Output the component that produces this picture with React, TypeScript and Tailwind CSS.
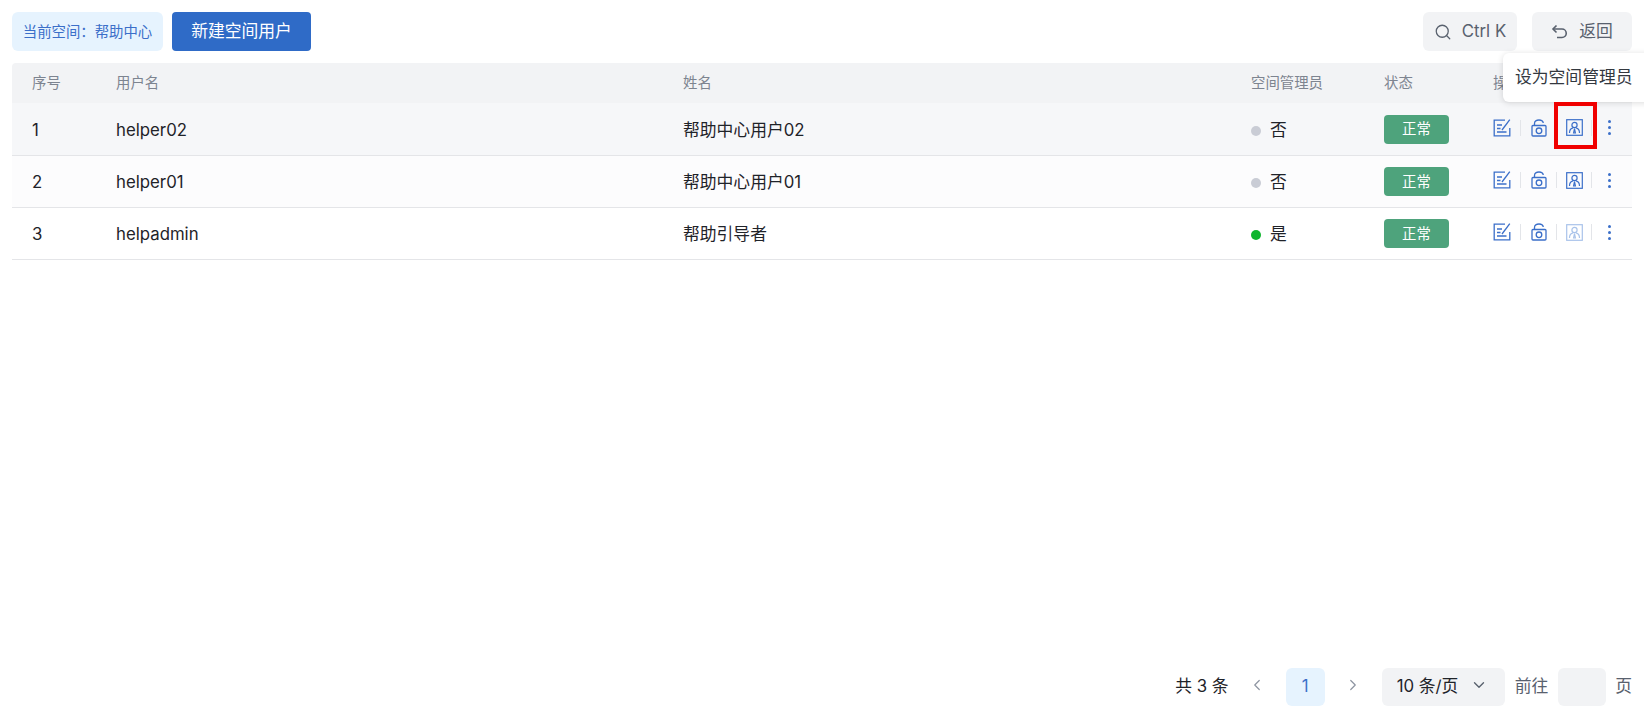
import { ChevronDown, ChevronLeft, ChevronRight, Search } from "lucide-react";

const users = [
  { id: 1, username: "helper02", name: "帮助中心用户02", admin: false, bg: "bg-[#f6f7f9]" },
  { id: 2, username: "helper01", name: "帮助中心用户01", admin: false, bg: "bg-[#fcfcfd]" },
  { id: 3, username: "helpadmin", name: "帮助引导者", admin: true, bg: "bg-white" },
];

const EditIcon = () => (
  <svg width="18" height="18" viewBox="0 0 18 18" fill="none" stroke="#3b6fc9" strokeWidth="1.3">
    <path d="M12 1.2H1.2v15.6h15.6V9" />
    <path d="M4 6h5M4 9.5h3.5M4 13h9.5" />
    <path d="M9 11 16.8 0.6" />
  </svg>
);

const LockIcon = () => (
  <svg width="16" height="18" viewBox="0 0 16 18" fill="none" stroke="#3b6fc9" strokeWidth="1.3">
    <rect x="1" y="6.5" width="14" height="10.5" rx="1" />
    <path d="M3.5 6.5V4.5C3.5 2 5.5 1 8 1s4 1.2 4.3 3" />
    <circle cx="8" cy="11.8" r="2.8" />
  </svg>
);

const AdminIcon = ({ disabled }: { disabled?: boolean }) => (
  <svg
    width="17"
    height="17"
    viewBox="0 0 17 17"
    fill="none"
    stroke={disabled ? "#a9c3ea" : "#3b6fc9"}
    strokeWidth="1.2"
  >
    <rect x="0.7" y="0.7" width="15.6" height="15.6" />
    <circle cx="8.5" cy="6" r="2.6" />
    <path d="M3.5 14c0-3 1.6-4.8 3.6-5.2M13.5 14c0-3-1.6-4.8-3.6-5.2M8.5 9.5 7.6 14h1.8z" />
  </svg>
);

const BackIcon = () => (
  <svg width="18" height="18" viewBox="0 0 18 18" fill="none" stroke="currentColor" strokeWidth="1.6">
    <path d="M5.5 2.5 2 6l3.5 3.5" />
    <path d="M2 6h9a4 4 0 0 1 0 8.5H6" />
  </svg>
);

const Divider = ({ hidden }: { hidden?: boolean }) => (
  <span className={`block h-[16px] w-px ${hidden ? "bg-transparent" : "bg-[#e3e5e9]"}`} />
);

const MoreIcon = () => (
  <span className="flex flex-col gap-[3px]">
    <span className="h-[3px] w-[3px] rounded-full bg-[#3b6fc9]" />
    <span className="h-[3px] w-[3px] rounded-full bg-[#3b6fc9]" />
    <span className="h-[3px] w-[3px] rounded-full bg-[#3b6fc9]" />
  </span>
);

export default function App() {
  return (
    <div
      className="relative h-[718px] w-[1644px] overflow-hidden bg-white text-[#1f2329]"
      style={{ fontFamily: 'Inter, "Noto Sans CJK SC", sans-serif' }}
    >
      {/* Toolbar */}
      <div className="flex h-[63px] items-start px-3 pt-3">
        <div className="flex h-[39px] w-[151px] items-center justify-center rounded-md bg-[#e6f3fe] text-[14.4px] text-[#3b6fc9]">
          当前空间：帮助中心
        </div>
        <button className="ml-[9px] h-[39px] w-[139px] rounded bg-[#2f6bc7] text-[16.8px] text-white">
          新建空间用户
        </button>
        <div className="ml-auto flex h-[39px] w-[94px] items-center justify-center gap-[10px] rounded-md bg-[#f2f3f5] text-[16.8px] text-[#59616e]">
          <Search size={18} strokeWidth={1.7} />
          <span>Ctrl K</span>
        </div>
        <div className="ml-[15px] flex h-[39px] w-[100px] items-center justify-center gap-[10px] rounded-md bg-[#f2f3f5] text-[16.8px] text-[#59616e]">
          <BackIcon />
          <span>返回</span>
        </div>
      </div>

      {/* Table */}
      <div className="mx-3 w-[1620px]">
        <div className="flex h-[40px] items-center rounded-t bg-[#f2f3f5] text-[14.4px] text-[#7d8490]">
          <div className="w-[104px] pl-5">序号</div>
          <div className="w-[567px]">用户名</div>
          <div className="w-[568px]">姓名</div>
          <div className="w-[133px]">空间管理员</div>
          <div className="w-[109px]">状态</div>
          <div>操作</div>
        </div>
        {users.map((user, i) => {
          const textPad = i === 0 ? "pt-[4px]" : "pt-[2px]";
          return (
            <div
              key={user.id}
              className={`flex items-center border-b border-[#e4e5e8] text-[16.8px] ${i === 0 ? "h-[53px]" : "h-[52px]"} ${user.bg}`}
            >
              <div className={`w-[104px] pl-5 ${textPad}`}>{user.id}</div>
              <div className={`w-[567px] ${textPad}`}>{user.username}</div>
              <div className={`w-[568px] ${textPad}`}>{user.name}</div>
              <div className={`flex w-[133px] items-center gap-[9px] ${textPad}`}>
                <span
                  className={`h-[10px] w-[10px] rounded-full ${user.admin ? "bg-[#0fb52e]" : "bg-[#c9ccd5]"}`}
                />
                <span>{user.admin ? "是" : "否"}</span>
              </div>
              <div className="w-[109px]">
                <span className="flex h-[29px] w-[65px] items-center justify-center rounded bg-[#4ea37c] text-[14.4px] text-white">
                  正常
                </span>
              </div>
              <div className="flex items-center pb-[3px]">
                <EditIcon />
                <span className="ml-[9px]"><Divider /></span>
                <span className="ml-[10px]"><LockIcon /></span>
                <span className="ml-[9px]"><Divider hidden={i === 0} /></span>
                <span className="ml-[9px]"><AdminIcon disabled={user.admin} /></span>
                <span className="ml-[8px]"><Divider /></span>
                <span className="ml-[16px]"><MoreIcon /></span>
              </div>
            </div>
          );
        })}
      </div>

      {/* Pagination */}
      <div className="absolute bottom-[12px] right-3 flex h-[38px] items-center text-[16.8px]">
        <span>共 3 条</span>
        <ChevronLeft className="ml-[19px] -mt-1 text-[#8d94a1]" size={18} strokeWidth={1.6} />
        <span className="ml-[20px] flex h-[38px] w-[39px] items-center justify-center rounded-md bg-[#e6f3fe] text-[#3b6fc9]">
          1
        </span>
        <ChevronRight className="ml-[19px] -mt-1 text-[#8d94a1]" size={18} strokeWidth={1.6} />
        <div className="ml-[20px] flex h-[38px] w-[123px] items-center rounded-md bg-[#f2f3f5] pl-[15px]">
          <span>10 条/页</span>
          <ChevronDown className="ml-[12px] -mt-1 text-[#59616e]" size={18} strokeWidth={1.8} />
        </div>
        <span className="ml-[10px] text-[#59616e]">前往</span>
        <span className="ml-[10px] h-[38px] w-[48px] rounded-md bg-[#f2f3f5]" />
        <span className="ml-[9px] text-[#59616e]">页</span>
      </div>

      {/* Tooltip over the row */}
      <div className="absolute left-[1503px] top-[53px] flex h-[49px] w-[150px] items-center rounded-l-md bg-white pl-[12px] text-[16.8px] text-[#33383f] shadow-[0_1px_6px_rgba(0,0,0,0.14)]">
        设为空间管理员
        <span className="absolute left-[69px] top-[46px] h-[6px] w-[6px] rotate-45 bg-white" />
      </div>

      {/* Annotation */}
      <div className="absolute left-[1554px] top-[102px] h-[47px] w-[43px] border-[4px] border-[#f00000]" />
    </div>
  );
}
